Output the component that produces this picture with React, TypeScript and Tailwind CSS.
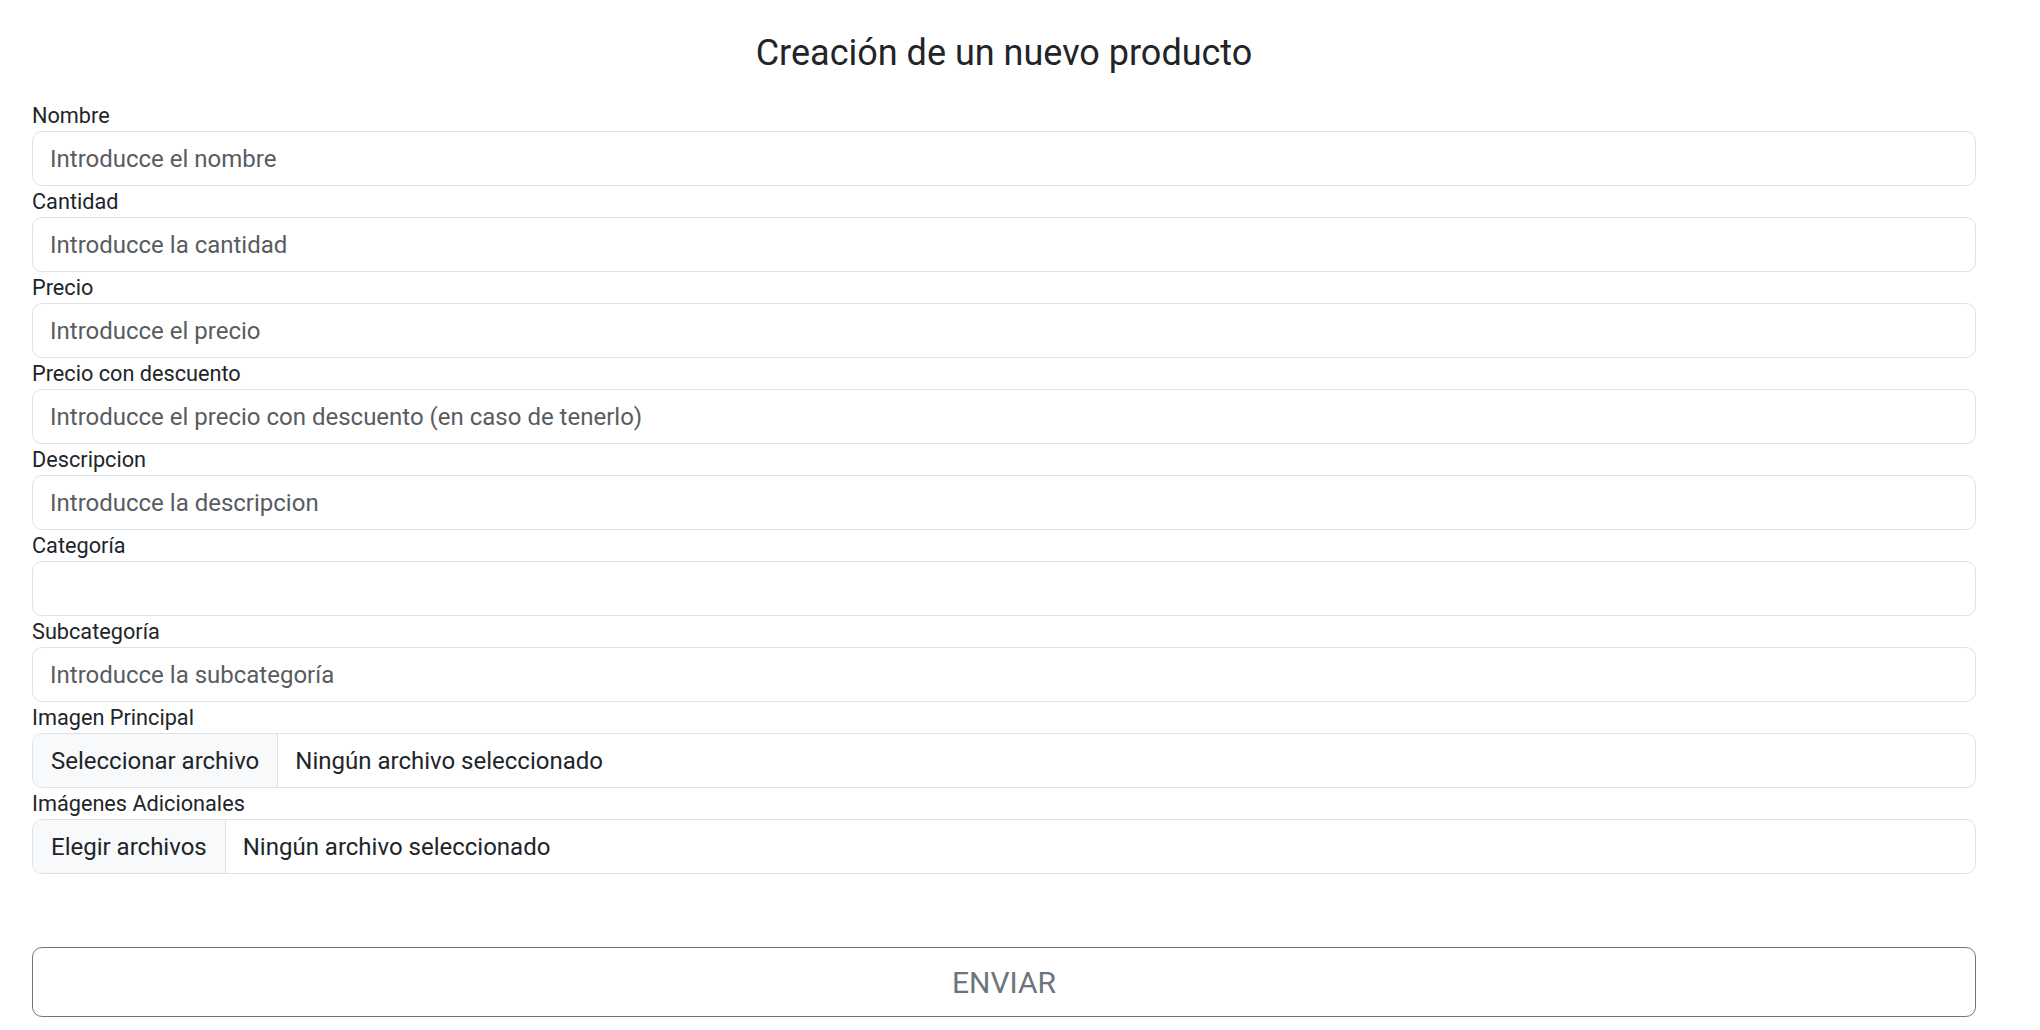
const fields = [
  { label: "Nombre", placeholder: "Introducce el nombre" },
  { label: "Cantidad", placeholder: "Introducce la cantidad" },
  { label: "Precio", placeholder: "Introducce el precio" },
  { label: "Precio con descuento", placeholder: "Introducce el precio con descuento (en caso de tenerlo)" },
  { label: "Descripcion", placeholder: "Introducce la descripcion" },
  { label: "Categoría", placeholder: "" },
  { label: "Subcategoría", placeholder: "Introducce la subcategoría" },
];

const TextField = ({ label, placeholder }: { label: string; placeholder: string }) => (
  <div className="flex flex-col">
    <label className="block text-[21.7px] leading-[31px]">{label}</label>
    <input
      type="text"
      placeholder={placeholder}
      className="block h-[55px] w-full rounded-[10px] border border-[#dee2e6] bg-white px-[17px] text-[24px] leading-[1.5] text-[#212529] outline-none placeholder:text-[#595c5f]"
    />
  </div>
);

const FileField = ({ label, button }: { label: string; button: string }) => (
  <div className="flex flex-col">
    <label className="block text-[21.7px] leading-[31px]">{label}</label>
    <div className="flex h-[55px] w-full items-stretch overflow-hidden rounded-[10px] border border-[#dee2e6] bg-white text-[24px]">
      <span className="flex items-center border-r border-[#dee2e6] bg-[#f8f9fa] px-[18px]">{button}</span>
      <span className="ml-[17px] flex items-center">Ningún archivo seleccionado</span>
    </div>
  </div>
);

export default function App() {
  return (
    <div className="min-h-screen bg-white pl-8 pr-16 pt-[32px] font-['Roboto',sans-serif] text-[#212529]">
      <h3 className="mb-[25px] text-center text-[36px] leading-[1.2] font-normal">
        Creación de un nuevo producto
      </h3>
      <form className="flex flex-col" onSubmit={(e) => e.preventDefault()}>
        {fields.map((f) => (
          <TextField key={f.label} label={f.label} placeholder={f.placeholder} />
        ))}
        <FileField label="Imagen Principal" button="Seleccionar archivo" />
        <FileField label="Imágenes Adicionales" button="Elegir archivos" />
        <button
          type="submit"
          className="mt-[73px] h-[70px] w-full rounded-[10px] border border-[#6c757d] bg-white text-[30px] text-[#6c757d]"
        >
          ENVIAR
        </button>
      </form>
    </div>
  );
}
